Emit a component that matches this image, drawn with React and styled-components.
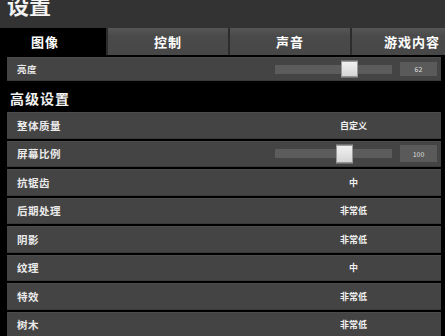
import React from "react";
import styled, { createGlobalStyle } from "styled-components";

const Global = createGlobalStyle`
  html, body {
    margin: 0;
    padding: 0;
    background: #000;
    overflow: hidden;
  }
  body {
    font-family: "Noto Sans CJK SC", "Noto Sans", sans-serif;
    color: #eee;
  }
`;

const Page = styled.div`
  width: 445px;
  height: 336px;
  overflow: hidden;
  background: #000;
`;

const Header = styled.div`
  height: 28px;
  background: #333;
  overflow: hidden;
`;

const Title = styled.h1`
  margin: -12px 0 0 7px;
  font-size: 22px;
  line-height: 32px;
  font-weight: 700;
  color: #f2f2f2;
`;

const Tabs = styled.div`
  display: flex;
  margin-left: -16px;
  height: 27px;
  background: #2a2a2a;
`;

const Tab = styled.div`
  flex: 0 0 122px;
  box-sizing: border-box;
  display: flex;
  align-items: center;
  justify-content: center;
  font-size: 13px;
  font-weight: 700;
  letter-spacing: 1px;
  color: #fff;
  background: ${(p) => (p.$active ? "#000" : "linear-gradient(#565656, #4a4a4a 30%, #474747)")};
  border-left: ${(p) => (p.$first ? "none" : "2px solid #2c2c2c")};
`;

const Content = styled.div`
  padding: 2px 4px 0 7px;
`;

const Row = styled.div`
  box-sizing: border-box;
  height: ${(p) => p.$h || 26.5}px;
  margin-bottom: 2px;
  display: flex;
  align-items: center;
  background: #444;
  border-top: 1px solid #4c4c4c;
  border-bottom: 1px solid #3a3a3a;
`;

const Label = styled.div`
  flex: 1;
  padding-left: 10px;
  font-size: ${(p) => p.$size || 10.5}px;
  font-weight: 700;
  color: #eaeaea;
  letter-spacing: 0.5px;
`;

const Control = styled.div`
  width: 167px;
  box-sizing: border-box;
  padding: ${(p) => (p.$slider ? "0 4px 0 1px" : "0 8px 0 0")};
  display: flex;
  align-items: center;
  justify-content: ${(p) => (p.$slider ? "flex-start" : "center")};
  gap: 8px;
`;

const Value = styled.span`
  font-size: 9px;
  font-weight: 700;
  color: #f0f0f0;
`;

const Track = styled.div`
  position: relative;
  width: 117px;
  height: 9px;
  background: #5c5c5c;
`;

const Thumb = styled.div`
  position: absolute;
  top: 50%;
  width: 17px;
  height: ${(p) => p.$h}px;
  transform: translateY(-50%);
  background: linear-gradient(#f2f2f2, #d4d4d4);
  border: 1px solid #9a9a9a;
  box-sizing: border-box;
`;

const Box = styled.div`
  width: 37px;
  height: ${(p) => p.$h}px;
  display: flex;
  align-items: center;
  justify-content: center;
  background: #5a5a5a;
  font-size: 7px;
  color: #ddd;
`;

const Heading = styled.h2`
  margin: 0;
  height: 29px;
  display: flex;
  align-items: center;
  padding-left: 3px;
  font-size: 14px;
  font-weight: 700;
  color: #f2f2f2;
  letter-spacing: 1px;
`;

function SliderControl({ pct, value, thumbH, boxH }) {
  return (
    <Control $slider>
      <Track>
        <Thumb $h={thumbH} style={{ left: `${pct}%` }} />
      </Track>
      <Box $h={boxH}>{value}</Box>
    </Control>
  );
}

const rows = [
  ["抗锯齿", "中"],
  ["后期处理", "非常低"],
  ["阴影", "非常低"],
  ["纹理", "中"],
  ["特效", "非常低"],
  ["树木", "非常低"],
];

export default function App() {
  return (
    <Page>
      <Global />
      <Header>
        <Title>设置</Title>
      </Header>
      <Tabs>
        <Tab $active $first>图像</Tab>
        <Tab>控制</Tab>
        <Tab>声音</Tab>
        <Tab>游戏内容</Tab>
      </Tabs>
      <Content>
        <Row $h={24}>
          <Label $size={9.5}>亮度</Label>
          <SliderControl pct={56} value="62" thumbH={17} boxH={14} />
        </Row>
        <Heading>高级设置</Heading>
        <Row>
          <Label>整体质量</Label>
          <Control>
            <Value>自定义</Value>
          </Control>
        </Row>
        <Row>
          <Label>屏幕比例</Label>
          <SliderControl pct={52} value="100" thumbH={19} boxH={17} />
        </Row>
        {rows.map(([l, v]) => (
          <Row key={l}>
            <Label>{l}</Label>
            <Control>
              <Value>{v}</Value>
            </Control>
          </Row>
        ))}
      </Content>
    </Page>
  );
}
